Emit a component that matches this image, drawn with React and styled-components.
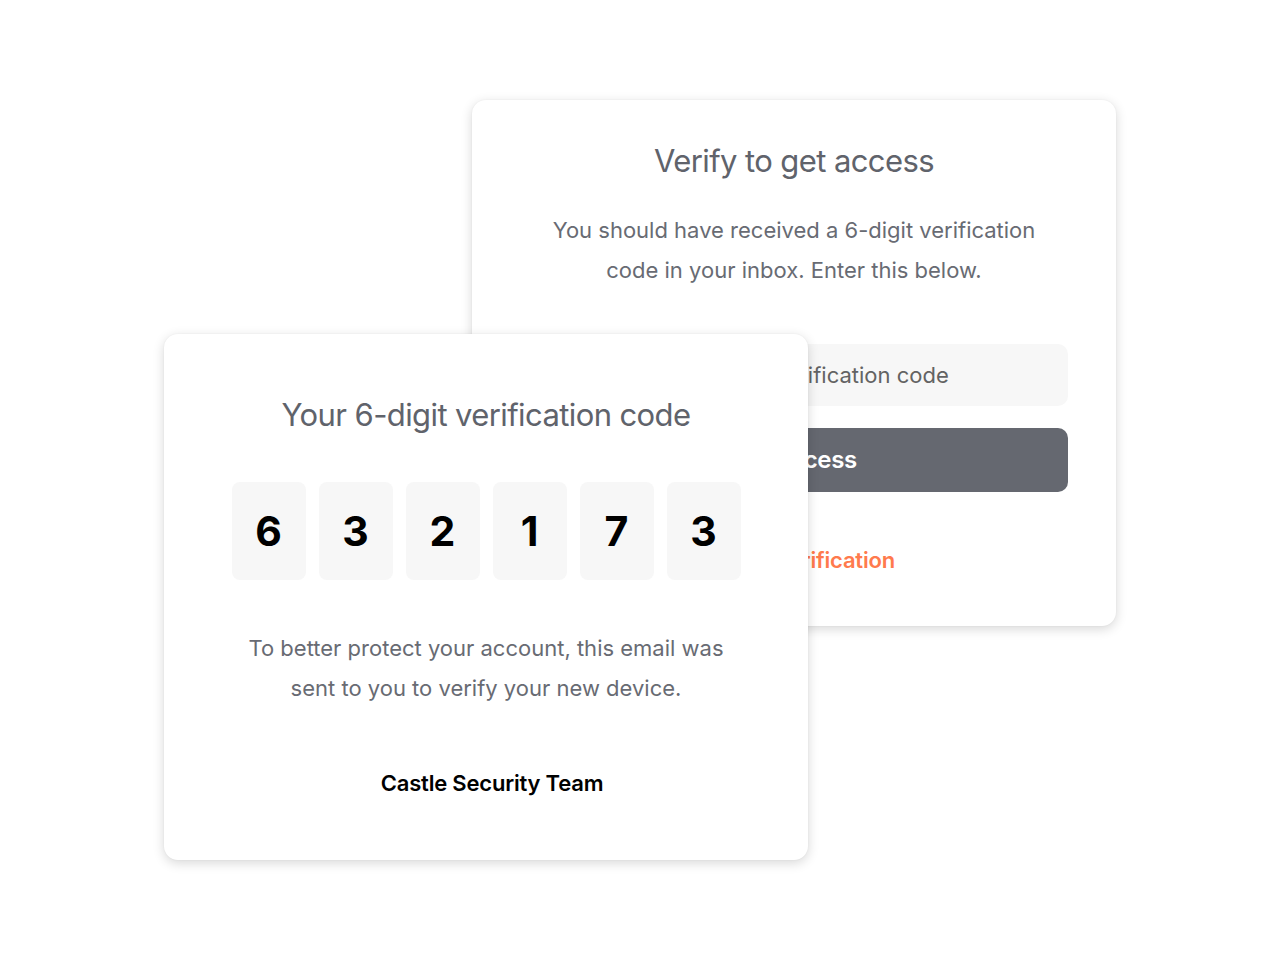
import React from "react";
import styled, { createGlobalStyle } from "styled-components";

const digits = ["6", "3", "2", "1", "7", "3"];

const App = () => {
  return (
    <>
      <GlobalStyle />
      <Stage>
        <BackCard>
          <Title>Verify to get access</Title>
          <Text>
            You should have received a 6-digit verification
            <br />
            code in your inbox. Enter this below.
          </Text>
          <CodeInput placeholder="Enter 6-digit verification code" />
          <SubmitButton>Get access</SubmitButton>
          <ResendLink>Resend verification</ResendLink>
        </BackCard>

        <FrontCard>
          <Title>Your 6-digit verification code</Title>
          <DigitRow>
            {digits.map((d, i) => (
              <Digit key={i}>{d}</Digit>
            ))}
          </DigitRow>
          <Text $gap={48}>
            To better protect your account, this email was
            <br />
            sent to you to verify your new device.
          </Text>
          <Signature>Castle Security Team</Signature>
        </FrontCard>
      </Stage>
    </>
  );
};

const GlobalStyle = createGlobalStyle`
  body {
    margin: 0;
    background: #ffffff;
    font-family: Inter, "Noto Sans", sans-serif;
  }
`;

const Stage = styled.div`
  display: grid;
  width: 1280px;
  height: 960px;
  overflow: hidden;
`;

const Card = styled.div`
  grid-area: 1 / 1;
  align-self: start;
  justify-self: start;
  box-sizing: border-box;
  width: 644px;
  height: 526px;
  background: #ffffff;
  border-radius: 14px;
  box-shadow: 0 3px 12px rgba(0, 0, 0, 0.16), 0 0 2px rgba(0, 0, 0, 0.05);
  display: flex;
  flex-direction: column;
  align-items: center;
`;

const BackCard = styled(Card)`
  margin: 100px 0 0 472px;
  padding: 40px 48px 0;
`;

const FrontCard = styled(Card)`
  margin: 334px 0 0 164px;
  padding: 60px 48px 0;
  z-index: 1;
`;

const Title = styled.h2`
  margin: 0;
  font-size: 31px;
  font-weight: 400;
  line-height: 42px;
  color: #60636b;
  letter-spacing: -0.6px;
`;

const Text = styled.p`
  margin: ${(p) => p.$gap || 28}px 0 0;
  font-size: 22px;
  line-height: 40px;
  text-align: center;
  color: #686b73;
  letter-spacing: 0;
`;

const CodeInput = styled.input`
  box-sizing: border-box;
  width: 100%;
  height: 62px;
  margin-top: 54px;
  padding: 0 24px;
  border: none;
  border-radius: 10px;
  background: #f7f7f7;
  font-family: inherit;
  font-size: 22px;
  text-align: center;
  outline: none;

  &::placeholder {
    color: #636363;
  }
`;

const SubmitButton = styled.button`
  width: 100%;
  height: 64px;
  margin-top: 22px;
  padding-bottom: 3px;
  border: none;
  border-radius: 10px;
  background: #656870;
  color: #ffffff;
  font-family: inherit;
  font-size: 24px;
  font-weight: 600;
  letter-spacing: -0.3px;
`;

const ResendLink = styled.a`
  margin-top: 55px;
  font-size: 22px;
  font-weight: 600;
  color: #ff7a4d;
  letter-spacing: -0.2px;
`;

const DigitRow = styled.div`
  display: flex;
  gap: 13px;
  margin-top: 46px;
`;

const Digit = styled.div`
  width: 74px;
  height: 98px;
  border-radius: 8px;
  background: #f7f7f7;
  display: flex;
  align-items: center;
  justify-content: center;
  font-size: 41px;
  font-weight: 700;
  color: #000000;
`;

const Signature = styled.div`
  margin-top: 62px;
  margin-left: 12px;
  font-size: 22px;
  font-weight: 600;
  color: #000000;
  letter-spacing: -0.2px;
`;

export default App;
